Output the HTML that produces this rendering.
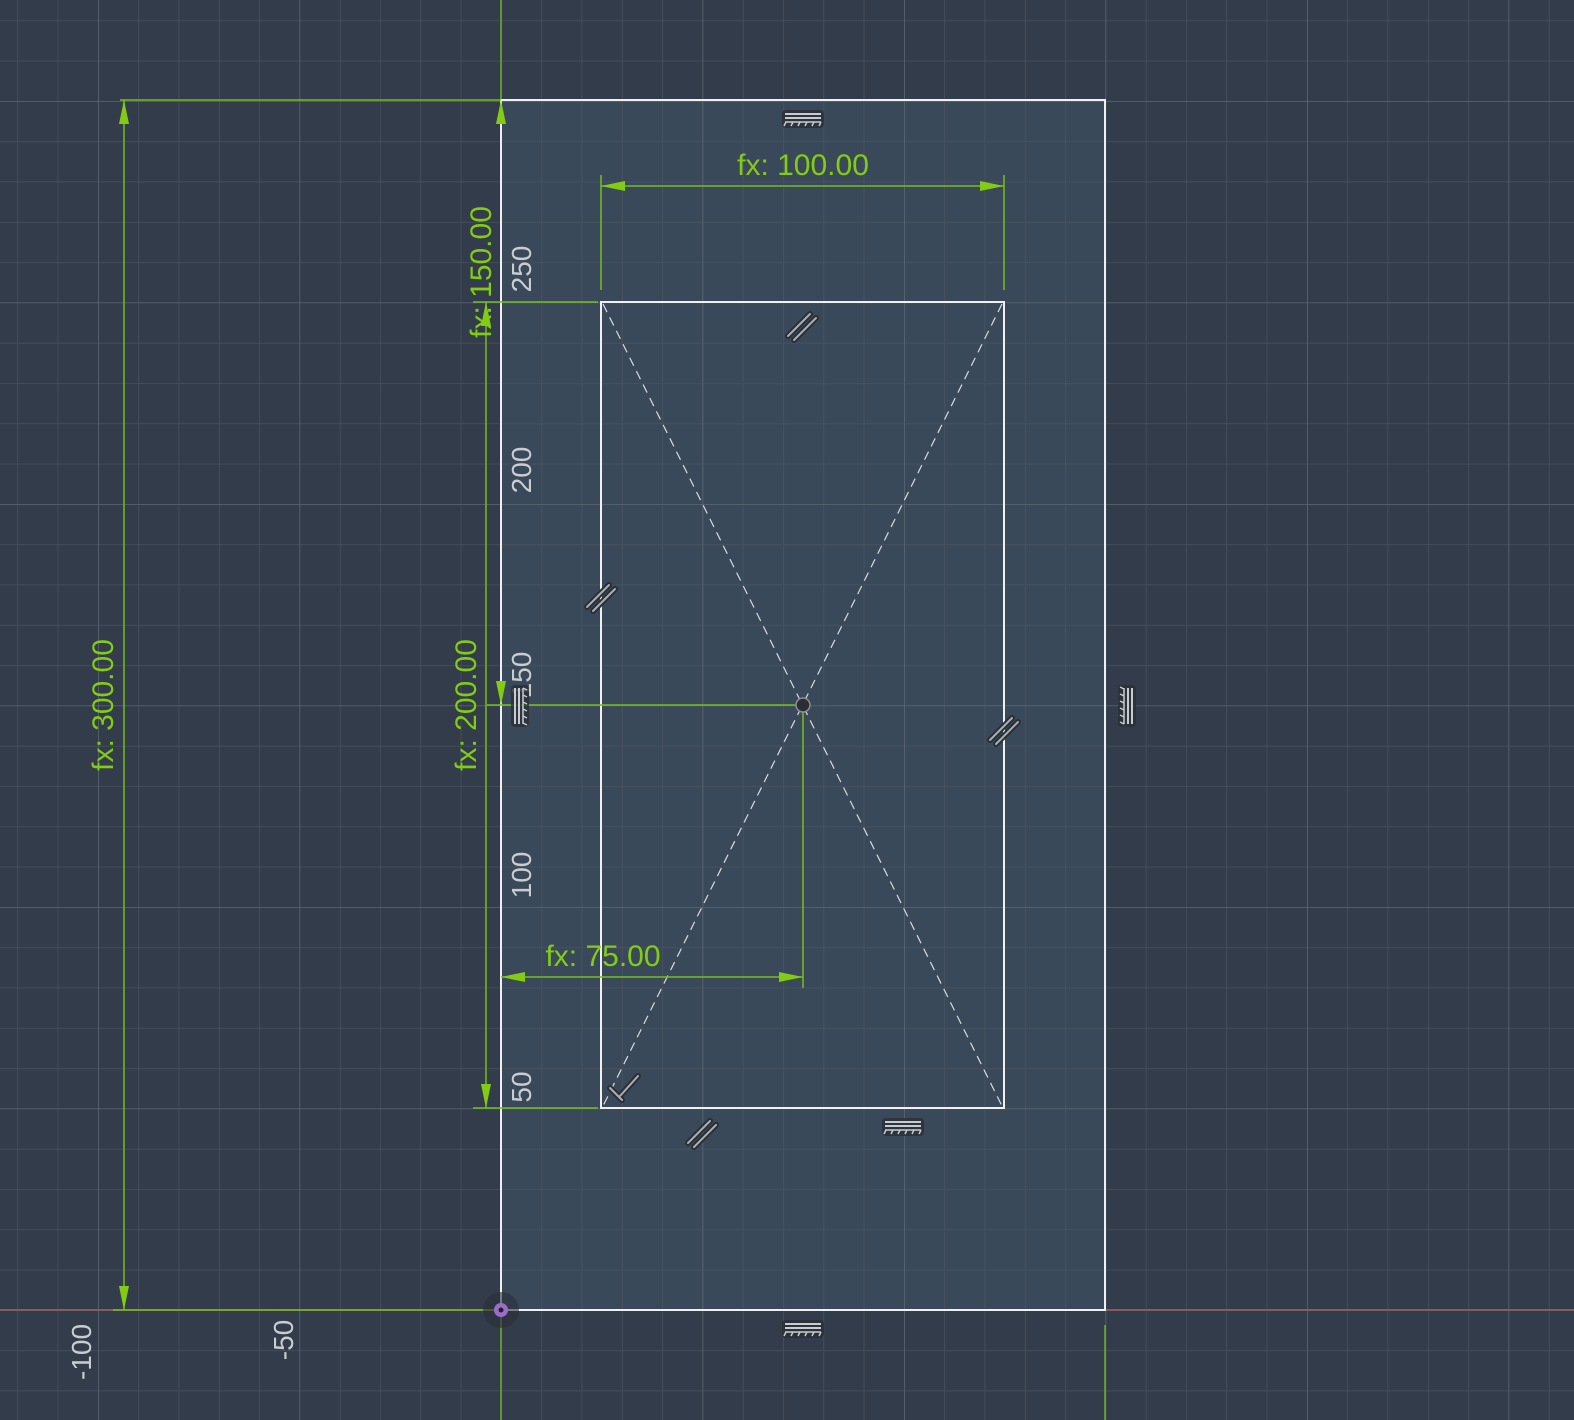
<!DOCTYPE html>
<html><head><meta charset="utf-8"><style>
html,body{margin:0;padding:0;background:#333c4a;width:1574px;height:1420px;overflow:hidden}
svg{display:block}
text{font-family:"Liberation Sans",sans-serif}
</style></head><body>
<svg width="1574" height="1420" viewBox="0 0 1574 1420" xmlns="http://www.w3.org/2000/svg">
<defs>
<pattern id="minor" patternUnits="userSpaceOnUse" x="501" y="1310" width="40.3" height="40.3">
<path d="M0 0V40.3M0 0H40.3" stroke="#4b5562" stroke-width="1.3" fill="none"/>
</pattern>
<pattern id="major" patternUnits="userSpaceOnUse" x="501" y="1310" width="201.5" height="201.5">
<path d="M0 0V201.5M0 0H201.5" stroke="#606a76" stroke-width="1.3" fill="none"/>
</pattern>
<g id="hfix">
<rect x="-21" y="-9" width="42" height="18" rx="4" fill="#2a2f36" opacity="0.8"/>
<path d="M-18 -5H18M-18 -1H18" stroke="#c8ccd0" stroke-width="2"/>
<path d="M-17 3l-2 4M-10 3l-2 4M-3 3l-2 4M4 3l-2 4M11 3l-2 4M18 3l-2 4M-18 3H18" stroke="#c8ccd0" stroke-width="1.5" fill="none"/>
</g>
<g id="par">
<path d="M-14 10L8 -12M-8 14L14 -8" stroke="#2a2f36" stroke-width="6" stroke-linecap="round"/>
<path d="M-14 10L8 -12M-8 14L14 -8" stroke="#a9aeb4" stroke-width="2" stroke-linecap="round"/>
</g>
</defs>
<rect width="1574" height="1420" fill="#333c4a"/>
<rect x="501" y="100" width="604" height="1210" fill="#3a4959"/>
<rect width="1574" height="1420" fill="url(#minor)"/>
<rect width="1574" height="1420" fill="url(#major)"/>
<line x1="0" y1="1310" x2="1574" y2="1310" stroke="#8a5a62" stroke-width="2"/>
<line x1="501" y1="0" x2="501" y2="1420" stroke="#6fae25" stroke-width="1.5"/>
<line x1="1105" y1="1325" x2="1105" y2="1420" stroke="#6fae25" stroke-width="1.5"/>
<rect x="501" y="100" width="604" height="1210" fill="none" stroke="#eef0f2" stroke-width="2"/>
<rect x="601" y="302" width="403" height="806" fill="none" stroke="#eef0f2" stroke-width="2"/>
<path d="M603 304L1002 1106M1002 304L603 1106" stroke="#d8dce0" stroke-width="1.2" stroke-dasharray="9 6"/>
<g stroke="#76bd1d" stroke-width="1.5" fill="none">
<path d="M120 100H501M113 1310H501M124 100V1310"/>
<path d="M473 302H598M473 1108H598M486 302V1108"/>
<path d="M487 705H803M803 705V988M501 977H803"/>
<path d="M601 175V290M1004 175V290M601 186H1004"/>
</g>
<g fill="#84cc14">
<path d="M124 100l-5 24h10z"/><path d="M124 1310l-5 -24h10z"/>
<path d="M486 302l-5 24h10z"/><path d="M486 1108l-5 -24h10z"/>
<path d="M501 100l-5 24h10z"/><path d="M501 705l-5 -24h10z"/>
<path d="M601 186l24 -5v10z"/><path d="M1004 186l-24 -5v10z"/>
<path d="M501 977l24 -5v10z"/><path d="M803 977l-24 -5v10z"/>
</g>
<g fill="#84cc14" font-size="30">
<text x="803" y="175" text-anchor="middle">fx: 100.00</text>
<text x="603" y="966" text-anchor="middle">fx: 75.00</text>
<text transform="translate(113,705) rotate(-90)" text-anchor="middle">fx: 300.00</text>
<text transform="translate(476,705) rotate(-90)" text-anchor="middle">fx: 200.00</text>
<text transform="translate(491,272) rotate(-90)" text-anchor="middle">fx: 150.00</text>
</g>
<g fill="#c9cdd2" font-size="28">
<text transform="translate(531,269) rotate(-90)" text-anchor="middle">250</text>
<text transform="translate(531,470) rotate(-90)" text-anchor="middle">200</text>
<text transform="translate(531,675) rotate(-90)" text-anchor="middle">150</text>
<text transform="translate(531,875) rotate(-90)" text-anchor="middle">100</text>
<text transform="translate(531,1087) rotate(-90)" text-anchor="middle">50</text>
<text transform="translate(91,1352) rotate(-90)" text-anchor="middle">-100</text>
<text transform="translate(293,1340) rotate(-90)" text-anchor="middle">-50</text>
</g>
<use href="#hfix" x="803" y="119"/>
<use href="#hfix" x="903" y="1127"/>
<use href="#hfix" x="803" y="1329"/>
<use href="#hfix" transform="translate(1127,706) rotate(90)"/>
<use href="#hfix" transform="translate(520,706) rotate(-90)"/>
<use href="#par" x="802" y="326"/>
<use href="#par" x="601" y="597"/>
<use href="#par" x="1004" y="730"/>
<use href="#par" x="702" y="1133"/>
<g>
<path d="M620 1096L638 1076M610 1088L622 1100" stroke="#2a2f36" stroke-width="6" stroke-linecap="round"/>
<path d="M620 1096L638 1076M610 1088L622 1100" stroke="#a9aeb4" stroke-width="2" stroke-linecap="round"/>
</g>
<circle cx="803" cy="705" r="7" fill="#2a2d32" stroke="#8b8f95" stroke-width="1.5"/>
<circle cx="501" cy="1310" r="18" fill="#2a2f38" opacity="0.6"/>
<circle cx="501" cy="1310" r="7" fill="#9b6cc9"/>
<circle cx="501" cy="1310" r="2.5" fill="#222"/>
</svg>
</body></html>
